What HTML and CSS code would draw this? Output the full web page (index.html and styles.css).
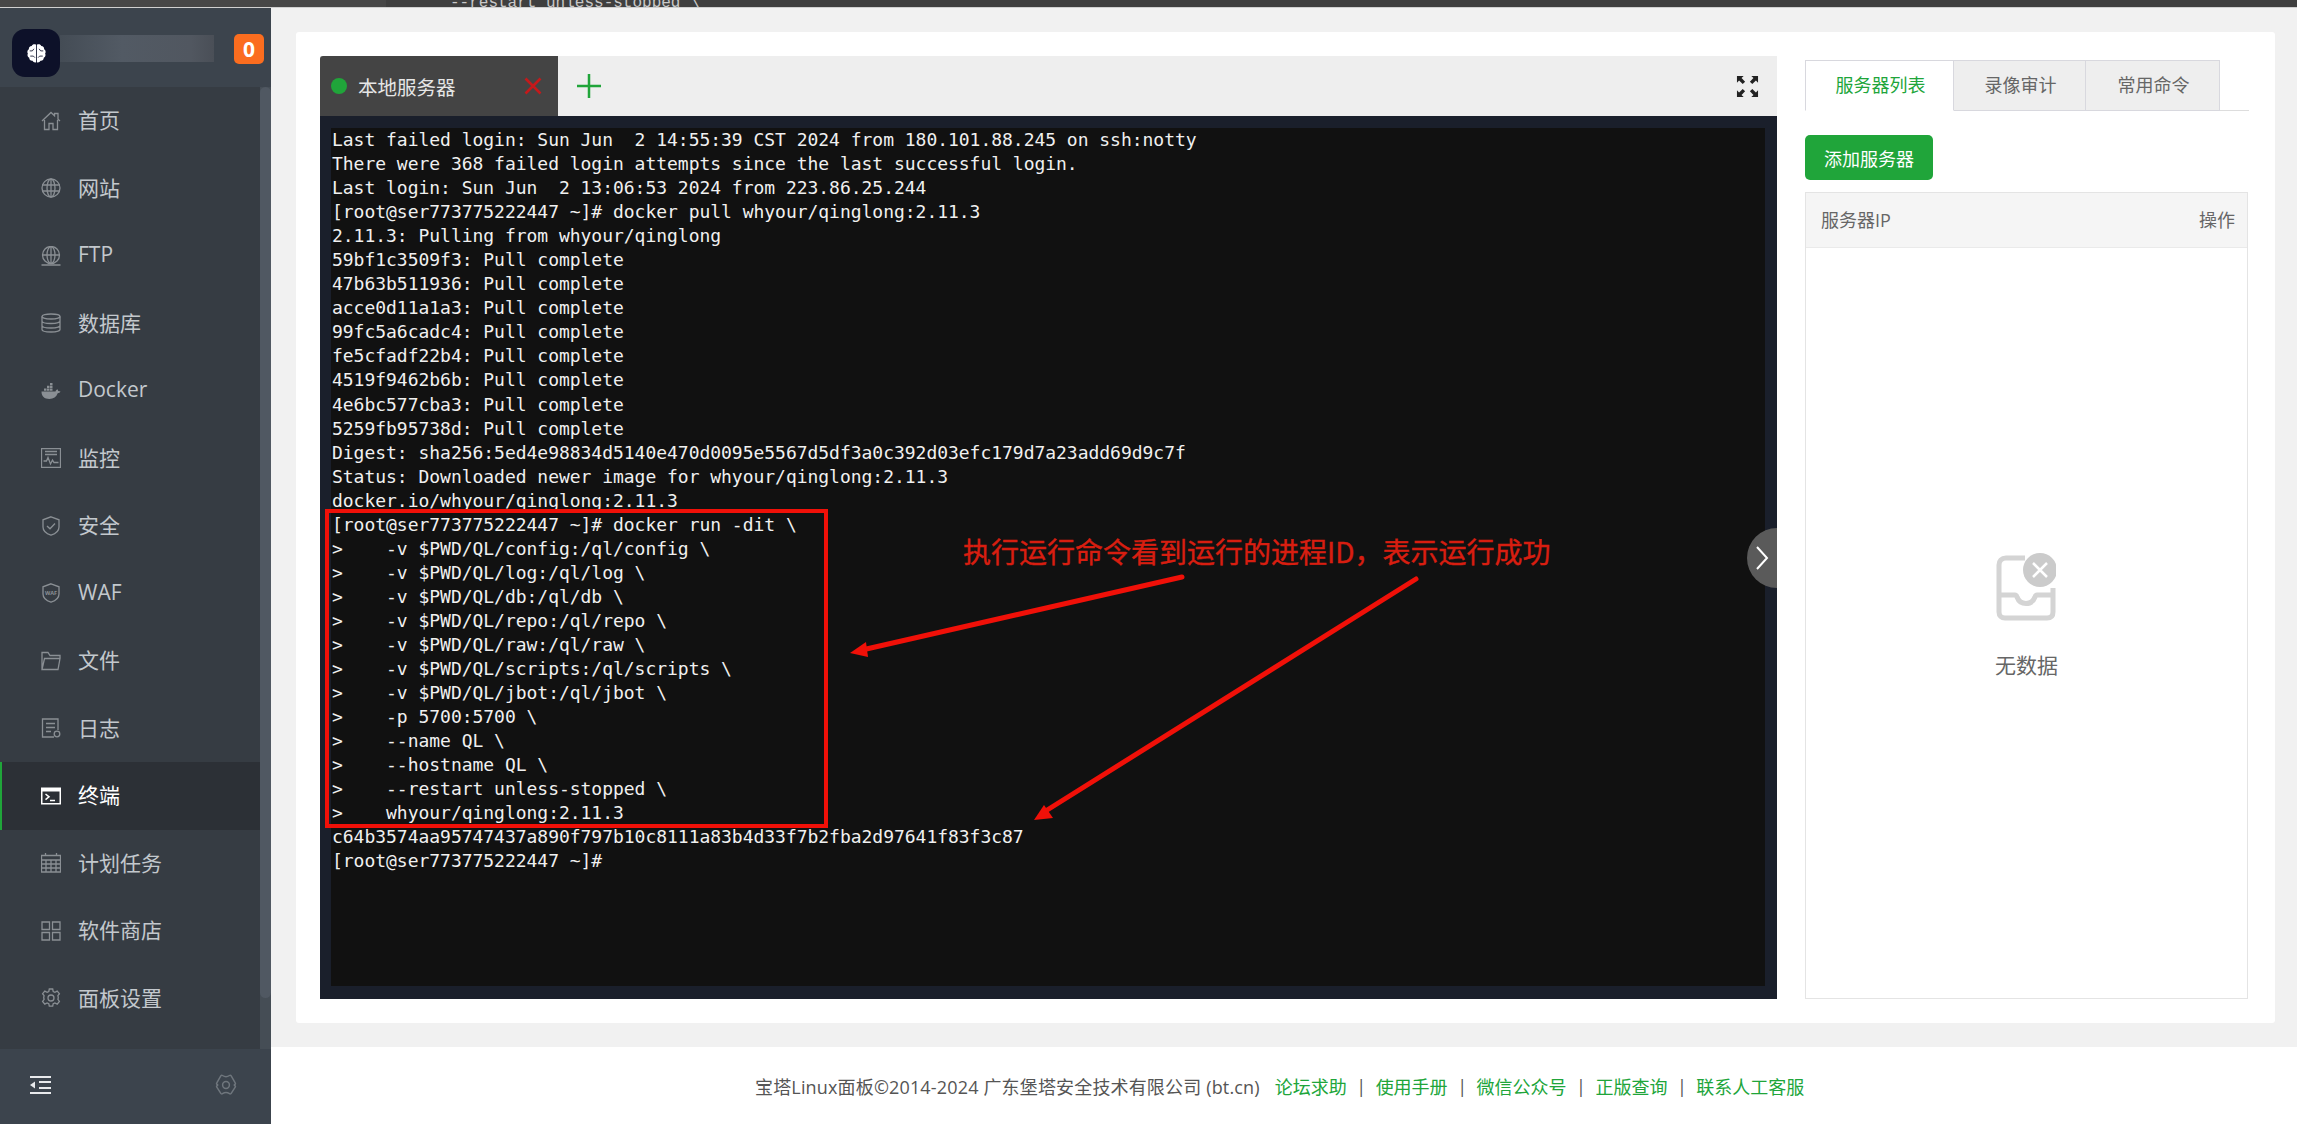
FILE: index.html
```html
<!DOCTYPE html>
<html lang="zh-CN">
<head>
<meta charset="utf-8">
<title>宝塔Linux面板 - 终端</title>
<link rel="stylesheet" href="styles.css">
</head>
<body>
<div class="topstrip"><span class="topstrip-text">--restart unless-stopped \</span></div>
<div class="shell">
  <aside class="sidebar">
    <div class="side-head">
      <div class="logo">
        <svg viewBox="0 0 24 24" width="25" height="25"><path class="i-fill-w" d="M11.600 3.500C9.600 2.800 8 3.400 7.400 4.800 5.600 4.800 4.400 6.200 4.700 8 3.200 8.900 2.800 10.800 3.700 12.100 2.900 13.600 3.500 15.400 5 16.100 5 18 6.500 19.300 8.200 19 9 20.500 10.400 20.900 11.600 20.400ZM12.400 3.500C14.400 2.800 16 3.400 16.600 4.800 18.400 4.800 19.600 6.200 19.300 8 20.800 8.900 21.200 10.800 20.300 12.100 21.100 13.600 20.500 15.400 19 16.100 19 18 17.500 19.300 15.800 19 15 20.500 13.600 20.900 12.400 20.400Z"/><path class="i-groove" d="M5.500 9.500h2.500l1.500-2M6 14.500h3l1.500 1.500M18.500 9.500h-2.500l-1.500-2M18 14.500h-3l-1.500 1.500"/></svg>
      </div>
      <div class="blurbar"></div>
      <div class="badge">0</div>
    </div>
    <div class="menu-wrap">
      <nav class="menu">
        <a class="item"><svg class="ico" viewBox="0 0 20 20"><path d="M1 10 10 1.500l3.500 3.300V2.500h3.500v5.700L19 10M3.500 9v9.500h4.500v-6h4v6h4.500V9"/></svg><span>首页</span></a>
        <a class="item"><svg class="ico" viewBox="0 0 20 20"><circle cx="10" cy="10" r="9"/><ellipse cx="10" cy="10" rx="4" ry="9"/><path d="M1 7h18M1 13h18M10 1v18"/></svg><span>网站</span></a>
        <a class="item"><svg class="ico" viewBox="0 0 20 20"><circle cx="10" cy="9" r="8.500"/><ellipse cx="10" cy="9" rx="4" ry="8.500"/><path d="M1.500 9h17M10 .5v17M.5 19h19"/></svg><span>FTP</span></a>
        <a class="item"><svg class="ico" viewBox="0 0 20 20"><ellipse cx="10" cy="3.500" rx="9" ry="2.500"/><path d="M1 3.500v13c0 1.400 4 2.500 9 2.500s9-1.100 9-2.500v-13M1 8c0 1.400 4 2.500 9 2.500s9-1.100 9-2.500M1 12.500c0 1.400 4 2.500 9 2.500s9-1.100 9-2.500"/></svg><span>数据库</span></a>
        <a class="item"><svg class="ico ico-solid" viewBox="0 0 20 20"><path d="M.5 10.500h14c.4-1.400 1.200-2 2.300-2 .3.500.4 1 .3 1.500 1 0 1.800.2 2.400.6-.6 1.200-1.500 1.700-2.800 1.700-1.300 3.700-4.200 5.700-8.300 5.700-5 0-7.900-2.700-7.900-7.500Z"/><path d="M3 7.500h2.500v2.300H3zM6 7.500h2.500v2.300H6zM9 7.500h2.500v2.300H9zM6 4.800h2.500V7H6zM9 4.800h2.500V7H9zM9 2h2.500v2.300H9z"/></svg><span>Docker</span></a>
        <a class="item"><svg class="ico" viewBox="0 0 20 20"><path d="M.5.500h19v19H.5zM4 3.500h12M4 6.500h12"/><path d="M2.500 13h3l1.500-3.500 2.500 6.500 2-4 1.500 2.500h4.500"/></svg><span>监控</span></a>
        <a class="item"><svg class="ico" viewBox="0 0 20 20"><path d="M10 .8 18 3.800v7.200c0 4-3.600 6.800-8 8.200-4.400-1.400-8-4.200-8-8.200V3.800Z"/><path d="m6 10 3 2.800L14 7.500"/></svg><span>安全</span></a>
        <a class="item"><svg class="ico" viewBox="0 0 20 20"><path d="M10 .8 18 3.800v7.200c0 4-3.600 6.800-8 8.200-4.400-1.400-8-4.200-8-8.200V3.800Z"/><text class="ico-waf" x="10" y="11.500">WAF</text></svg><span>WAF</span></a>
        <a class="item"><svg class="ico" viewBox="0 0 20 20"><path d="M1 18.500V1.500h6l2 3h10v3M1 18.500h16l2-11H3.500L1 18.500Z"/></svg><span>文件</span></a>
        <a class="item"><svg class="ico" viewBox="0 0 20 20"><path d="M13 19H1.500V1h15.500v11M5 5.500h9M5 9.500h9M5 13.500h5"/><circle cx="16" cy="16" r="2.800"/></svg><span>日志</span></a>
        <a class="item active"><svg class="ico ico-term" viewBox="0 0 20 20"><path class="t-bg" d="M0 1.500h20v17H0z"/><path class="t-in" d="M1.500 5.500h17v11.500h-17z"/><path class="t-line" d="m4.500 8 3.500 2.800-3.500 2.800M9 14.500h5"/></svg><span>终端</span></a>
        <a class="item"><svg class="ico" viewBox="0 0 20 20"><path d="M.5 2.500h19v16.500H.5zM4.500 0v3M15.500 0v3M.5 7h19M.5 11h19M.5 15h19M5 7v12M10 7v12M15 7v12"/></svg><span>计划任务</span></a>
        <a class="item"><svg class="ico" viewBox="0 0 20 20"><path d="M1 1h7.500v7.500H1zM11.500 1H19v7.500h-7.500zM1 11.500h7.500V19H1zM11.500 11.500H19V19h-7.500z"/></svg><span>软件商店</span></a>
        <a class="item"><svg class="ico" viewBox="0 0 20 20"><path d="M8.300 1h3.400l.5 2.500 1.700.8 2.300-1.200 2.200 2.600-1.500 2 .4 2-.4 1.700 1.500 2-2.200 2.700-2.300-1.200-1.700.8-.5 2.500H8.300l-.5-2.500-1.700-.8-2.300 1.200-2.200-2.700 1.500-2-.4-1.700.4-2-1.500-2 2.200-2.600 2.300 1.200 1.700-.8Z"/><circle cx="10" cy="10" r="3"/></svg><span>面板设置</span></a>
      </nav>
      <div class="scroll-track"><div class="scroll-thumb"></div></div>
    </div>
    <div class="side-foot">
      <svg class="collapse" viewBox="0 0 22 20"><path d="M0 1h21v2H0zM9 6h12v2H9zM9 12h12v2H9zM0 17h21v2H0z"/><path d="M5 6.500v7L0 10z"/></svg>
      <svg class="foot-gear" viewBox="0 0 22 22"><path d="M7.500 1.500c1.200.8 2.300 1.200 3.500 1.200s2.300-.4 3.500-1.200c.6-.4 1.300-.2 1.700.4l4 7c.4.600.2 1.300-.4 1.600-.7.300-.7.700 0 1 .6.300.8 1 .4 1.600l-4 6.200c-.4.600-1.100.8-1.700.4-1.200-.8-2.300-1.200-3.500-1.200s-2.300.4-3.500 1.200c-.6.400-1.300.2-1.700-.4l-4-6.200c-.4-.6-.2-1.300.4-1.600.7-.3.700-.7 0-1-.6-.3-.8-1-.4-1.600l4-7c.4-.6 1.100-.8 1.700-.4Z"/><circle cx="11" cy="11" r="3.400"/></svg>
    </div>
  </aside>
  <div class="right-col">
    <main class="content">
      <section class="card">
        <div class="terminal">
          <div class="term-tabs">
            <div class="term-tab">
              <i class="dot"></i><span class="tab-name">本地服务器</span>
              <svg class="tab-close" viewBox="0 0 18 18"><path d="M1.500 1.500l15 15M16.500 1.500l-15 15"/></svg>
            </div>
            <svg class="tab-add" viewBox="0 0 24 24"><path d="M12 0v24M0 12h24"/></svg>
            <svg class="tab-full" viewBox="0 0 24 24"><path d="M1 1h7L5.800 3.200 9.500 7 7 9.500 3.200 5.800 1 8ZM23 1h-7l2.200 2.200L14.500 7 17 9.500l3.800-3.700L23 8ZM1 23h7l-2.200-2.200L9.500 17 7 14.500l-3.800 3.700L1 16ZM23 23h-7l2.200-2.200-3.700-3.800 2.500-2.500 3.800 3.700L23 16Z"/></svg>
          </div>
          <div class="term-body">
<pre class="screen">Last failed login: Sun Jun  2 14:55:39 CST 2024 from 180.101.88.245 on ssh:notty
There were 368 failed login attempts since the last successful login.
Last login: Sun Jun  2 13:06:53 2024 from 223.86.25.244
[root@ser773775222447 ~]# docker pull whyour/qinglong:2.11.3
2.11.3: Pulling from whyour/qinglong
59bf1c3509f3: Pull complete
47b63b511936: Pull complete
acce0d11a1a3: Pull complete
99fc5a6cadc4: Pull complete
fe5cfadf22b4: Pull complete
4519f9462b6b: Pull complete
4e6bc577cba3: Pull complete
5259fb95738d: Pull complete
Digest: sha256:5ed4e98834d5140e470d0095e5567d5df3a0c392d03efc179d7a23add69d9c7f
Status: Downloaded newer image for whyour/qinglong:2.11.3
docker.io/whyour/qinglong:2.11.3
[root@ser773775222447 ~]# docker run -dit \
>    -v $PWD/QL/config:/ql/config \
>    -v $PWD/QL/log:/ql/log \
>    -v $PWD/QL/db:/ql/db \
>    -v $PWD/QL/repo:/ql/repo \
>    -v $PWD/QL/raw:/ql/raw \
>    -v $PWD/QL/scripts:/ql/scripts \
>    -v $PWD/QL/jbot:/ql/jbot \
>    -p 5700:5700 \
>    --name QL \
>    --hostname QL \
>    --restart unless-stopped \
>    whyour/qinglong:2.11.3
c64b3574aa95747437a890f797b10c8111a83b4d33f7b2fba2d97641f83f3c87
[root@ser773775222447 ~]#</pre>
          </div>
          <svg class="marks" viewBox="0 0 1457 943">
            <rect class="mark-box" x="7" y="455" width="499" height="315"/>
            <path class="mark-line" d="M862 521 542 594"/>
            <path class="mark-head" d="M530 597 546 586 548 601Z"/>
            <path class="mark-line" d="M1096 523 724 756"/>
            <path class="mark-head" d="M714 764 724 749 733 762Z"/>
          </svg>
          <div class="mark-text">执行运行命令看到运行的进程ID，表示运行成功</div>
          <div class="side-toggle"><svg viewBox="0 0 14 26" width="14" height="26"><path d="M2 2l10 11L2 24"/></svg></div>
        </div>
        <div class="panel">
          <div class="ptabs">
            <div class="ptab on">服务器列表</div>
            <div class="ptab">录像审计</div>
            <div class="ptab">常用命令</div>
          </div>
          <button class="add-btn">添加服务器</button>
          <div class="srv-table">
            <div class="srv-head"><span>服务器IP</span><span>操作</span></div>
            <div class="srv-empty">
              <svg class="empty-ico" viewBox="0 0 60 68"><path class="tray" d="M29 5H10C5.500 5 3 8 3 12v47c0 4 2.500 6 6 6h42c4 0 6-2 6-6V35M3 42h16c1 0 1.500.5 2 2 1.500 4 4.500 6.500 9 6.500s7.500-2.500 9-6.500c.5-1.500 1-2 2-2h15"/><circle class="bub" cx="44" cy="17" r="17"/><path class="bub-x" d="m37 10 14 14M51 10 37 24"/></svg>
              <div class="empty-text">无数据</div>
            </div>
          </div>
        </div>
      </section>
    </main>
    <footer class="footer">
      <span>宝塔Linux面板©2014-2024 广东堡塔安全技术有限公司 (bt.cn)</span>
      <a>论坛求助</a><i>|</i><a>使用手册</a><i>|</i><a>微信公众号</a><i>|</i><a>正版查询</a><i>|</i><a>联系人工客服</a>
    </footer>
  </div>
</div>
</body>
</html>
```
FILE: styles.css
```css
* { box-sizing: border-box; }
html, body { margin: 0; height: 100%; }
body {
  width: 2297px; height: 1124px; overflow: hidden;
  font-family: "Open Sans", "Noto Sans CJK SC", sans-serif;
  background: #fff; color: #666;
  display: flex; flex-direction: column;
}
.topstrip {
  height: 8px; flex: none; background: linear-gradient(90deg, #474747 386px, #3f3f3f 386px); border-bottom: 1px solid #d0d0d0;
  overflow: hidden; padding-left: 450px;
}
.topstrip-text {
  display: block; font: 16px/16px "Liberation Mono", monospace; color: #c8c8c8;
  margin-top: -5px; white-space: pre;
}
.shell { flex: 1; display: flex; min-height: 0; }

/* sidebar */
.sidebar { width: 271px; flex: none; display: flex; flex-direction: column; background: #3c444d; }
.side-head { height: 79px; flex: none; display: flex; align-items: center; position: relative; padding: 0 7px 0 12px; }
.logo { width: 48px; height: 48px; border-radius: 13px; background: #0d1129; display: flex; align-items: center; justify-content: center; margin-top: 11px; flex: none; z-index: 1; }
.i-fill-w { fill: #fff; }
.i-groove { fill: none; stroke: #0d1129; stroke-width: .8; }
.blurbar { width: 154px; height: 27px; margin-top: 1px; background: linear-gradient(90deg, #444c55, #525a64 40%, #515760 85%, #4a4f57); flex: none; }
.badge { width: 30px; height: 30px; margin-left: 20px; margin-top: 2px; border-radius: 5px; background: #fb6d1f; color: #fff; font: 700 21px/30px "Open Sans", sans-serif; text-align: center; flex: none; }
.menu-wrap { flex: 1; min-height: 0; display: flex; background: #363c43; }
.menu { flex: 1; display: flex; flex-direction: column; }
.item { height: 67.500px; flex: none; display: flex; align-items: center; padding-left: 41px; gap: 17px; font-size: 21px; color: #c3c8cd; }
.item span { margin-bottom: 3px; }
.item.active { background: #2c3036; border-left: 2px solid #20a53a; padding-left: 39px; color: #fff; }
.ico { width: 20px; height: 20px; flex: none; fill: none; stroke: #8a8f94; stroke-width: 1.300; }
.ico-solid { fill: #8a8f94; stroke: none; }
.ico-waf { font: 700 5.500px "Open Sans", sans-serif; text-anchor: middle; fill: #8a8f94; stroke: none; }
.ico-term { stroke: none; }
.t-bg { fill: #fff; }
.t-in { fill: #2c3036; }
.t-line { fill: none; stroke: #fff; stroke-width: 1.500; }
.scroll-track { width: 11px; flex: none; background: #454d55; }
.scroll-thumb { height: 911px; background: #505862; border-radius: 6px; }
.side-foot { height: 75px; flex: none; display: flex; align-items: center; justify-content: space-between; padding: 0 34px 4px 30px; }
.collapse { width: 22px; height: 20px; fill: #e8eaec; }
.foot-gear { width: 22px; height: 22px; fill: none; stroke: #6f767d; stroke-width: 1.500; }

/* main */
.right-col { flex: 1; min-width: 0; display: flex; flex-direction: column; }
.content { height: 1039px; flex: none; background: #f1f1f1; padding: 24px 22px 24px 25px; }
.card { height: 991px; background: #fff; border-radius: 3px; padding: 24px 26px 24px 24px; display: flex; gap: 28px; }
.terminal { width: 1457px; flex: none; position: relative; display: flex; flex-direction: column; background: #1a1f2b; }
.term-tabs { height: 60px; flex: none; background: #eee; display: flex; align-items: center; position: relative; }
.term-tab { width: 238px; height: 60px; background: #444; display: flex; align-items: center; padding-left: 11px; flex: none; border-radius: 3px 0 0 0; }
.dot { width: 16px; height: 16px; border-radius: 50%; background: #20a53a; flex: none; }
.tab-name { margin-left: 11px; font-size: 19.500px; color: #e6e6e6; }
.tab-close { width: 18px; height: 18px; margin-left: 68px; fill: none; stroke: #c4191b; stroke-width: 2.600; flex: none; }
.tab-add { width: 24px; height: 24px; margin-left: 19px; fill: none; stroke: #20a53a; stroke-width: 2.500; flex: none; }
.tab-full { width: 23px; height: 23px; margin-left: auto; margin-right: 18px; fill: #222; flex: none; }
.term-body { flex: 1; min-height: 0; padding: 12px 12px 13px 11px; }
.screen {
  margin: 0; height: 100%; background: #111; color: #f0f0f0; padding-left: 1px;
  font: 18px/24.050px "DejaVu Sans Mono", monospace; letter-spacing: -.03px; overflow: hidden;
}
.marks { position: absolute; left: 0; top: 0; width: 1457px; height: 943px; pointer-events: none; }
.mark-box { fill: none; stroke: #f01008; stroke-width: 4; }
.mark-line { fill: none; stroke: #f01008; stroke-width: 5; stroke-linecap: round; }
.mark-head { fill: #f01008; }
.mark-text { position: absolute; left: 643px; top: 478px; font: 400 28px/34px "Noto Sans CJK SC", sans-serif; -webkit-text-stroke: .4px #d81e10; color: #d81e10; white-space: nowrap; }
.side-toggle { position: absolute; right: 0; top: 472px; width: 30px; height: 60px; background: #5a5a5a; border-radius: 30px 0 0 30px / 30px 0 0 30px; display: flex; align-items: center; justify-content: center; }
.side-toggle svg { fill: none; stroke: #fff; stroke-width: 2; }

/* right panel */
.panel { width: 444px; flex: none; display: flex; flex-direction: column; }
.ptabs { height: 51px; margin-top: 4px; flex: none; display: flex; border-bottom: 1px solid #ddd; }
.ptab { height: 51px; width: 132px; border: 1px solid #d8d8de; border-left: 0; background: #eee; font-size: 18px; line-height: 49px; text-align: center; color: #666; padding-left: 2px; }
.ptab.on { width: 149px; border-left: 1px solid #d8d8de; border-bottom: 1px solid #fff; background: #fff; color: #20a53a; }
.ptab:last-child { width: 134px; }
.add-btn { width: 128px; height: 45px; margin-top: 24px; flex: none; border: 0; border-radius: 5px; background: #20a53a; color: #fff; padding: 0; font: 18px "Open Sans", "Noto Sans CJK SC", sans-serif; }
.srv-table { flex: 1; min-height: 0; margin-top: 12px; width: 443px; border: 1px solid #e4e4e4; display: flex; flex-direction: column; }
.srv-head { height: 55px; flex: none; background: #f5f5f5; border-bottom: 1px solid #eaeaea; display: flex; justify-content: space-between; align-items: center; padding: 0 12px 2px 15px; font-size: 18px; color: #666; }
.srv-empty { flex: 1; display: flex; flex-direction: column; align-items: center; padding-top: 305px; }
.empty-ico { width: 60px; height: 68px; margin-left: -2px; flex: none; }
.tray { fill: none; stroke: #d4d4d4; stroke-width: 5; }
.bub { fill: #cbcbcb; }
.bub-x { fill: none; stroke: #fff; stroke-width: 2.500; }
.empty-text { margin-top: 29px; font-size: 21px; line-height: 30px; color: #666; }

/* footer */
.footer { flex: 1; display: flex; align-items: center; padding-left: 484px; font-size: 18px; color: #555; }
.footer a { color: #20a53a; }
.footer span { margin-right: 15px; letter-spacing: .16px; }
.footer i { font-style: normal; color: #555; margin: 0 9.500px; }
```
